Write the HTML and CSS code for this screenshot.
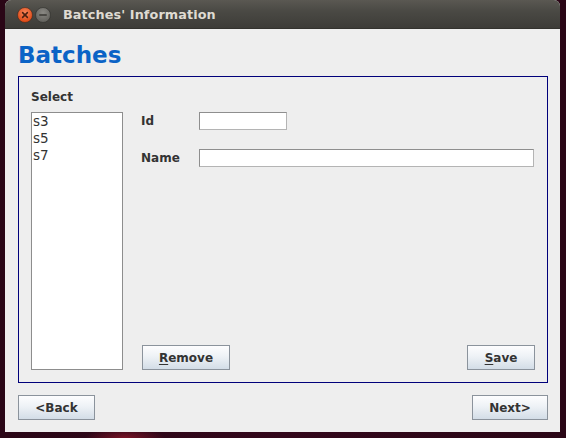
FILE: index.html
```html
<!DOCTYPE html>
<html>
<head>
<meta charset="utf-8">
<title>Batches' Information</title>
<link rel="stylesheet" href="styles.css">
</head>
<body>
<div class="window">
  <div class="titlebar">
    <div class="controls">
      <svg class="ctl" width="16" height="16" viewBox="0 0 16 16">
        <defs>
          <radialGradient id="cg" cx="50%" cy="35%" r="60%">
            <stop offset="0" stop-color="#f7855a"/>
            <stop offset="1" stop-color="#df4a16"/>
          </radialGradient>
        </defs>
        <circle cx="8" cy="8" r="7.5" fill="url(#cg)" stroke="#3a2a22" stroke-width="0.6"/>
        <path d="M5.6 5.6 L10.4 10.4 M10.4 5.6 L5.6 10.4" stroke="#4a2010" stroke-width="1.5" stroke-linecap="round"/>
      </svg>
      <svg class="ctl" width="16" height="16" viewBox="0 0 16 16">
        <defs>
          <radialGradient id="mg" cx="50%" cy="35%" r="60%">
            <stop offset="0" stop-color="#8a8984"/>
            <stop offset="1" stop-color="#64635e"/>
          </radialGradient>
        </defs>
        <circle cx="8" cy="8" r="7.5" fill="url(#mg)" stroke="#2e2d2a" stroke-width="0.6"/>
        <path d="M4.8 8 L11.2 8" stroke="#3a3935" stroke-width="1.6" stroke-linecap="round"/>
      </svg>
    </div>
    <span class="title">Batches' Information</span>
  </div>
  <div class="content">
    <h1 class="heading">Batches</h1>
    <div class="panel">
      <div class="select-label">Select</div>
      <div class="panel-body">
        <ul class="list">
          <li>s3</li>
          <li>s5</li>
          <li>s7</li>
        </ul>
        <div class="form">
          <div class="row">
            <span class="label">Id</span>
            <div class="field field-short"></div>
          </div>
          <div class="row row-name">
            <span class="label">Name</span>
            <div class="field field-wide"></div>
          </div>
          <div class="actions">
            <button class="btn btn-remove"><u>R</u>emove</button>
            <button class="btn btn-save"><u>S</u>ave</button>
          </div>
        </div>
      </div>
    </div>
    <div class="nav">
      <button class="btn btn-back">&lt;Back</button>
      <button class="btn btn-next">Next&gt;</button>
    </div>
  </div>
</div>
</body>
</html>
```

FILE: styles.css
```css
html, body {
  margin: 0;
  padding: 0;
}

body {
  width: 566px;
  height: 438px;
  overflow: hidden;
  background:
    radial-gradient(ellipse 40px 10px at 125px 438px, #7a1426 0%, rgba(122,20,38,0) 100%),
    linear-gradient(90deg, #2a0616 0%, #33071b 50%, #2a0616 100%);
  font-family: "DejaVu Sans", "Liberation Sans", sans-serif;
}

.window {
  margin-left: 5px;
  width: 555px;
  height: 432px;
  display: flex;
  flex-direction: column;
  background: #eeeeee;
  border-radius: 6px 6px 0 0;
  overflow: hidden;
}

.titlebar {
  height: 29px;
  flex: none;
  display: flex;
  align-items: center;
  background: linear-gradient(#5a5852 0%, #4a4944 40%, #3d3c38 100%);
  border-bottom: 1px solid #33322e;
  box-sizing: border-box;
}

.controls {
  display: flex;
  gap: 2px;
  margin-left: 12px;
  margin-top: 1px;
}

.ctl {
  display: block;
}

.title {
  margin-left: 12px;
  font-weight: bold;
  font-size: 12.8px;
  color: #dfdbd2;
  letter-spacing: 0.1px;
  margin-top: 1px;
}

.content {
  flex: 1;
  display: flex;
  flex-direction: column;
  padding: 13px 12px 12px 13px;
}

.heading {
  margin: 0 0 7px 0;
  font-size: 23px;
  line-height: 27px;
  font-weight: bold;
  color: #0b63c6;
}

.panel {
  height: 307px;
  box-sizing: border-box;
  border: 1px solid #00007a;
  padding: 13px 13px 12px 12px;
  display: flex;
  flex-direction: column;
}

.select-label {
  font-size: 12px;
  line-height: 15px;
  font-weight: bold;
  color: #333333;
  margin-bottom: 7px;
}

.panel-body {
  flex: 1;
  display: flex;
  gap: 18px;
}

.list {
  width: 92px;
  box-sizing: border-box;
  margin: 0;
  padding: 0 0 0 1px;
  list-style: none;
  background: #ffffff;
  border: 1px solid #8d8d8d;
  font-size: 13.5px;
  line-height: 17px;
  color: #333333;
}

.form {
  flex: 1;
  display: flex;
  flex-direction: column;
}

.row {
  display: flex;
  align-items: center;
  height: 18px;
}

.row-name {
  margin-top: 19px;
}

.label {
  width: 58px;
  flex: none;
  font-size: 12px;
  font-weight: bold;
  color: #333333;
}

.field {
  height: 18px;
  box-sizing: border-box;
  background: #ffffff;
  border: 1px solid #8e8e8e;
  border-right-color: #b4b4b4;
  border-bottom-color: #b4b4b4;
}

.field-short {
  width: 88px;
}

.field-wide {
  flex: 1;
}

.actions {
  margin-top: auto;
  display: flex;
  justify-content: space-between;
}

.btn {
  height: 25px;
  box-sizing: border-box;
  margin: 0;
  padding: 0;
  border: 1px solid #8b939c;
  border-radius: 0;
  background: linear-gradient(#fdfdfe 0%, #eef2f6 45%, #d3dde7 100%);
  font-family: "DejaVu Sans", "Liberation Sans", sans-serif;
  font-size: 12px;
  font-weight: bold;
  color: #333333;
  text-align: center;
}

.btn u {
  text-decoration-thickness: 1px;
  text-underline-offset: 2px;
}

.btn-remove {
  width: 88px;
  margin-left: 1px;
}

.btn-save {
  width: 68px;
  margin-right: -1px;
}

.nav {
  margin-top: 12px;
  display: flex;
  justify-content: space-between;
}

.btn-back {
  width: 77px;
}

.btn-next {
  width: 76px;
}
```
